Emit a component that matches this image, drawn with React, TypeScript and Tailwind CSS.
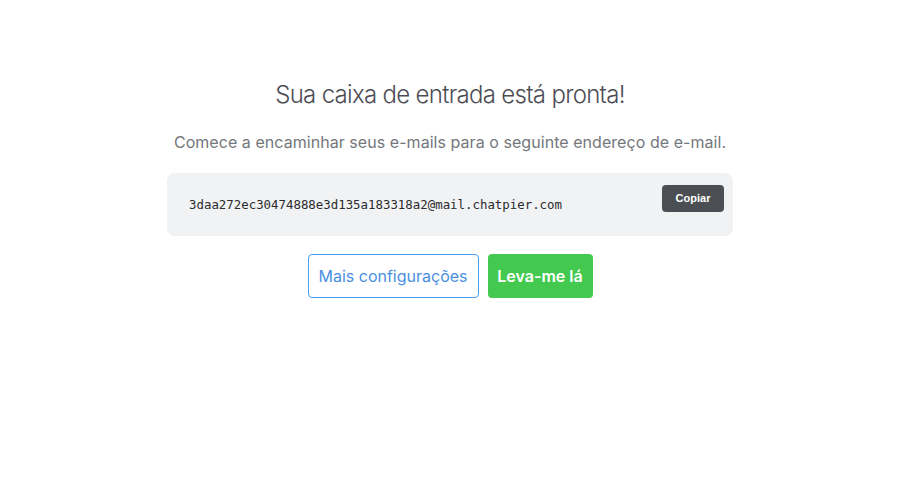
import React from 'react';

const App: React.FC = () => {
  const email = '3daa272ec30474888e3d135a183318a2@mail.chatpier.com';

  return (
    <div className="min-h-screen bg-white pr-[12px] font-['Inter',sans-serif]">
      <div className="flex flex-col items-center pt-[79px]">
        <h1 className="text-[24px] leading-[32px] font-light text-[#4d4d55] tracking-[-0.7px]">
          Sua caixa de entrada está pronta!
        </h1>
        <p className="mt-[19px] text-[16px] leading-[24px] tracking-[0.05px] text-[#74777c]">
          Comece a encaminhar seus e-mails para o seguinte endereço de e-mail.
        </p>

        <div className="mt-[19px] flex h-[63px] w-[566px] items-start justify-between rounded-lg bg-[#f1f2f4] pl-[22px] pr-[9px]">
          <span className="self-center pt-[1px] font-['DejaVu_Sans_Mono',monospace] text-[12.4px] text-[#2b2b2b]">
            {email}
          </span>
          <button className="mt-3 h-[27px] w-[62px] rounded-[4px] bg-[#4b4f54] font-['Liberation_Sans',sans-serif] text-[11px] font-bold text-white">
            Copiar
          </button>
        </div>

        <div className="mt-[18px] flex gap-[9px]">
          <button className="h-[44px] w-[171px] rounded-[4px] border border-[#4a9ff5] bg-white text-[16px] text-[#4a90e2]">
            Mais configurações
          </button>
          <button className="h-[44px] w-[105px] rounded-[4px] bg-[#43c94f] text-[16px] font-semibold text-white">
            Leva-me lá
          </button>
        </div>
      </div>
    </div>
  );
};

export default App;
